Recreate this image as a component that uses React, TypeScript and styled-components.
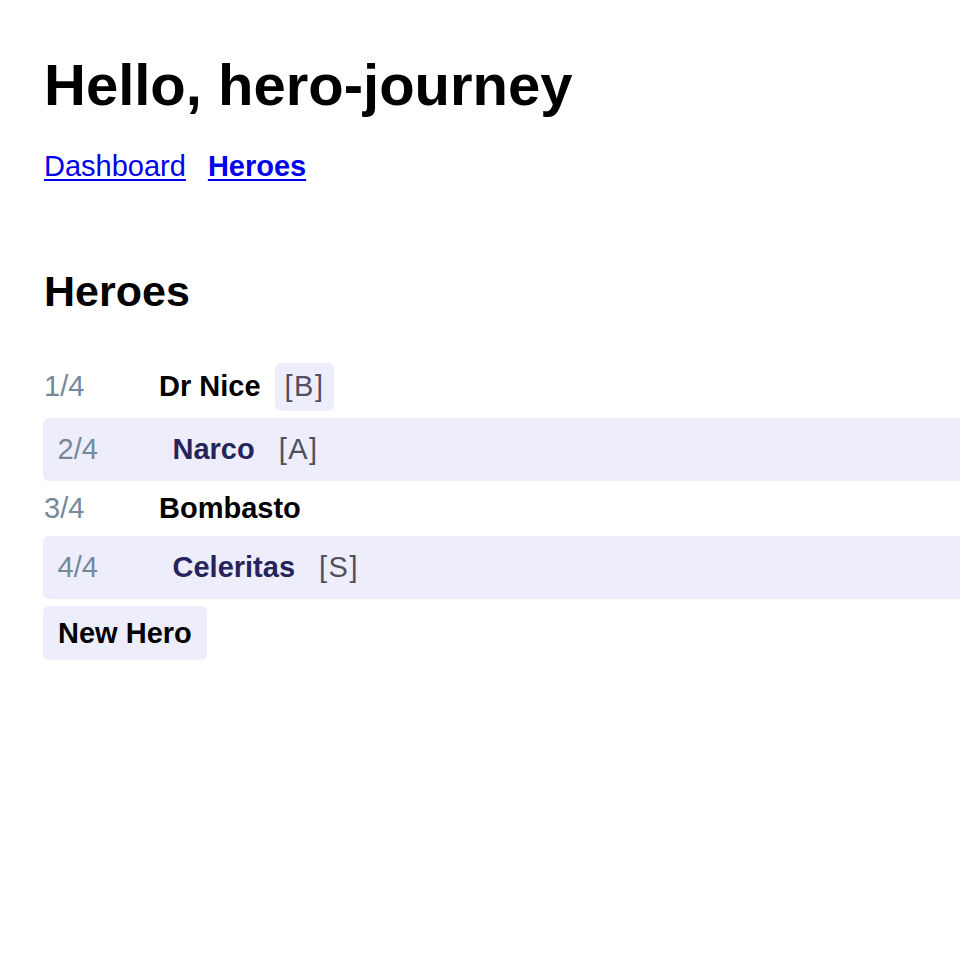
import React from "react";
import styled, { createGlobalStyle } from "styled-components";

const GlobalStyle = createGlobalStyle`
  html, body {
    margin: 0;
    padding: 0;
    background: #ffffff;
    overflow-x: hidden;
  }
  body {
    font-family: "Liberation Sans", Arial, Helvetica, sans-serif;
    color: #000000;
  }
`;

const Page = styled.div`
  display: flex;
  flex-direction: column;
  padding: 52px 0 40px 43px;
`;

const Title = styled.h1`
  margin: 0;
  font-size: 58px;
  line-height: 66px;
  font-weight: 700;
  padding-left: 1px;
`;

const Nav = styled.nav`
  display: flex;
  gap: 22px;
  margin-top: 27.5px;
  padding-left: 1px;
`;

const NavLink = styled.a<{ $active?: boolean }>`
  font-size: 29px;
  line-height: 41px;
  color: #0000ee;
  text-decoration: underline;
  text-underline-offset: 3px;
  font-weight: ${(p) => (p.$active ? 700 : 400)};
  cursor: pointer;
`;

const SectionTitle = styled.h2`
  margin: 79px 0 0;
  font-size: 43px;
  line-height: 50px;
  font-weight: 700;
  padding-left: 1px;
`;

const List = styled.ul`
  list-style: none;
  margin: 47px 0 0;
  padding: 0;
  display: flex;
  flex-direction: column;
  gap: 7px;
`;

const Row = styled.li<{ $selected?: boolean }>`
  display: flex;
  align-items: center;
  min-height: 41px;
  padding: ${(p) => (p.$selected ? "8px 14.5px 7px" : "0 0 0 1px")};
  background: ${(p) => (p.$selected ? "#eeedfc" : "transparent")};
  border-radius: ${(p) => (p.$selected ? "6px 0 0 6px" : "0")};
  font-size: 29px;
  line-height: 41px;
`;

const Index = styled.span`
  width: 115px;
  flex: none;
  color: #778899;
`;

const Name = styled.span<{ $selected?: boolean }>`
  font-weight: 700;
  color: ${(p) => (p.$selected ? "#25255a" : "#000000")};
`;

const Badge = styled.span`
  margin-left: 14px;
  padding: 3.5px 9px 3.5px 10px;
  background: #eeedfc;
  border-radius: 6px;
  color: #50505f;
  letter-spacing: 1.5px;
`;

const NewButton = styled.button`
  align-self: flex-start;
  margin-top: 7px;
  padding: 7px 15px 6px;
  border: none;
  border-radius: 6px;
  background: #eeedfc;
  color: #000000;
  font-family: "Liberation Sans", Arial, Helvetica, sans-serif;
  font-size: 29px;
  line-height: 41px;
  font-weight: 700;
  cursor: pointer;
`;

type Hero = { name: string; grade?: string; selected?: boolean };

const heroes: Hero[] = [
  { name: "Dr Nice", grade: "B" },
  { name: "Narco", grade: "A", selected: true },
  { name: "Bombasto" },
  { name: "Celeritas", grade: "S", selected: true },
];

export default function App() {
  return (
    <>
      <GlobalStyle />
      <Page>
        <Title>Hello, hero-journey</Title>
        <Nav>
          <NavLink>Dashboard</NavLink>
          <NavLink $active>Heroes</NavLink>
        </Nav>
        <SectionTitle>Heroes</SectionTitle>
        <List>
          {heroes.map((h, i) => (
            <Row key={h.name} $selected={h.selected}>
              <Index>
                {i + 1}/{heroes.length}
              </Index>
              <Name $selected={h.selected}>{h.name}</Name>
              {h.grade && <Badge>[{h.grade}]</Badge>}
            </Row>
          ))}
        </List>
        <NewButton>New Hero</NewButton>
      </Page>
    </>
  );
}
